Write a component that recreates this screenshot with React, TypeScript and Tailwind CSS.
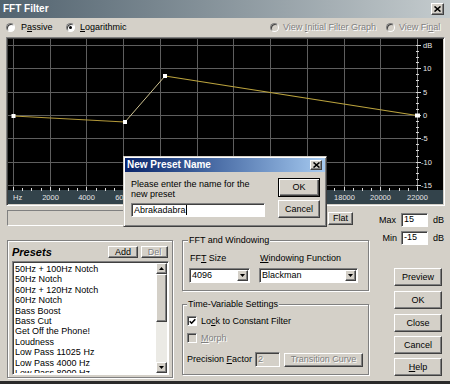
import React from "react";

const raised =
  "border border-t-white border-l-white border-r-[#404040] border-b-[#404040] shadow-[inset_-1px_-1px_0_#808080]";
const sunken =
  "border border-t-[#808080] border-l-[#808080] border-r-white border-b-white shadow-[inset_1px_1px_0_#404040]";
const etched = "border border-[#808080] shadow-[1px_1px_0_#ffffff,inset_1px_1px_0_#ffffff]";
const disabledText = "text-[#808080] [text-shadow:1px_1px_0_#ffffff]";

function U({ children }: { children: React.ReactNode }) {
  return <span className="underline underline-offset-[1px]">{children}</span>;
}

function Btn({
  children,
  className = "",
  disabled = false,
}: {
  children: React.ReactNode;
  className?: string;
  disabled?: boolean;
}) {
  return (
    <div
      className={`flex items-center justify-center bg-[#d4d0c8] leading-none ${raised} ${
        disabled ? disabledText : "text-black"
      } ${className}`}
    >
      {children}
    </div>
  );
}

function XGlyph() {
  return (
    <svg width="7" height="6" viewBox="0 0 7 6">
      <path d="M0.5 0.5L6.5 5.5M6.5 0.5L0.5 5.5" stroke="#000" strokeWidth="1.6" />
    </svg>
  );
}

function DownArrow() {
  return (
    <svg width="5" height="3" viewBox="0 0 5 3">
      <path d="M0 0H5L2.5 3Z" fill="#000" />
    </svg>
  );
}

function UpArrow() {
  return (
    <svg width="5" height="3" viewBox="0 0 5 3">
      <path d="M0 3H5L2.5 0Z" fill="#000" />
    </svg>
  );
}

function Radio({ checked = false, disabled = false }: { checked?: boolean; disabled?: boolean }) {
  return (
    <span
      className={`relative inline-block shrink-0 w-[9px] h-[9px] rounded-full border border-t-[#808080] border-l-[#808080] border-b-white border-r-white shadow-[inset_1px_1px_0_#404040] ${
        disabled ? "bg-[#d4d0c8]" : "bg-white"
      }`}
    >
      {checked && <span className="absolute left-[2px] top-[2px] w-[3px] h-[3px] rounded-full bg-black" />}
    </span>
  );
}

function Check({ checked = false, disabled = false }: { checked?: boolean; disabled?: boolean }) {
  return (
    <span
      className={`inline-flex shrink-0 items-center justify-center w-[10px] h-[10px] ${sunken} ${
        disabled ? "bg-[#d4d0c8]" : "bg-white"
      }`}
    >
      {checked && (
        <svg width="7" height="7" viewBox="0 0 7 7">
          <path d="M0.7 3.2L2.6 5.2L6.3 1.2" stroke="#000" strokeWidth="1.6" fill="none" />
        </svg>
      )}
    </span>
  );
}

function Select({ value, className = "" }: { value: string; className?: string }) {
  return (
    <div className={`flex items-center bg-white h-[15px] pl-[2px] pr-px ${sunken} ${className}`}>
      <span className="flex-1 leading-none">{value}</span>
      <div className={`w-[11px] h-[11px] flex items-center justify-center bg-[#d4d0c8] ${raised}`}>
        <DownArrow />
      </div>
    </div>
  );
}

function Graph() {
  const step = 36.73;
  const xs = Array.from({ length: 12 }, (_, k) => Math.round(5 + step * k) + 0.5);
  const ys = [6, 29.33, 52.67, 76, 99.33, 122.67, 146].map((y) => Math.round(y) + 0.5);
  const dbs = ["dB", "10", "5", "0", "-5", "-10", "-15"];
  const minorX = Array.from({ length: 45 }, (_, i) => Math.round(5 + (i * step) / 4) + 0.5);
  const minorY = Array.from({ length: 25 }, (_, i) => Math.round(6 + (i * 23.333) / 4) + 0.5);
  const p = [
    [5.5, 77],
    [117, 83],
    [157, 37],
    [409, 76.5],
  ];
  return (
    <svg width="435" height="165" viewBox="0 0 435 165" className="block">
      <rect width="435" height="165" fill="#000" />
      <rect y="151" width="435" height="14" fill="#33434b" />
      {xs.map((x) => (
        <line key={"v" + x} x1={x} x2={x} y1="0" y2="151" stroke="#5e5e5e" strokeWidth="1" />
      ))}
      {ys.map((y) => (
        <line key={"h" + y} x1="0" x2="410" y1={y} y2={y} stroke="#5e5e5e" strokeWidth="1" />
      ))}
      <line x1="409.5" x2="409.5" y1="0" y2="151" stroke="#8a8a8a" strokeWidth="1" />
      {minorX.map((x, i) => (
        <line
          key={"mx" + i}
          x1={x}
          x2={x}
          y1={i % 4 === 0 ? 148 : 149}
          y2="152"
          stroke="#d8d8d8"
          strokeWidth="1"
        />
      ))}
      {minorY.map((y, i) => (
        <line
          key={"my" + i}
          x1="408"
          x2={i % 4 === 0 ? 413 : 411}
          y1={y}
          y2={y}
          stroke="#d8d8d8"
          strokeWidth="1"
        />
      ))}
      {ys.map((y, i) => (
        <text
          key={"t" + i}
          x={dbs[i].startsWith("-") ? 413 : 415}
          y={y + 2.8}
          fontSize="7.5"
          fill="#e4e4e4"
          fontFamily="'Liberation Sans', Arial, sans-serif"
        >
          {dbs[i]}
        </text>
      ))}
      <text x="5" y="161" fontSize="7.5" fill="#e4e4e4" fontFamily="'Liberation Sans', Arial, sans-serif">
        Hz
      </text>
      {xs.slice(1).map((x, i) => (
        <text
          key={"l" + i}
          x={x}
          y="161"
          fontSize="7.5"
          textAnchor="middle"
          fill="#e4e4e4"
          fontFamily="'Liberation Sans', Arial, sans-serif"
        >
          {(i + 1) * 2000}
        </text>
      ))}
      <line x1={p[0][0]} y1={p[0][1]} x2={p[1][0]} y2={p[1][1]} stroke="#b49a3a" strokeWidth="1.2" />
      <line x1={p[1][0]} y1={p[1][1]} x2={p[2][0]} y2={p[2][1]} stroke="#cfc392" strokeWidth="1" />
      <line x1={p[2][0]} y1={p[2][1]} x2={p[3][0]} y2={p[3][1]} stroke="#bca43e" strokeWidth="1.2" />
      {p.map(([x, y], i) => (
        <rect key={"p" + i} x={x - 2} y={y - 2} width={i === 3 ? 5 : 4} height="4" fill="#ffffff" />
      ))}
    </svg>
  );
}

const presets = [
  "50Hz + 100Hz Notch",
  "50Hz Notch",
  "60Hz + 120Hz Notch",
  "60Hz Notch",
  "Bass Boost",
  "Bass Cut",
  "Get Off the Phone!",
  "Loudness",
  "Low Pass 11025 Hz",
  "Low Pass 4000 Hz",
  "Low Pass 8000 Hz",
];

export default function App() {
  return (
    <div className="relative w-[450px] h-[384px] overflow-hidden bg-[#d4d0c8] text-black text-[9px] font-['Liberation_Sans',Arial,sans-serif] border-b-[3px] border-b-[#2a2a2a] flex flex-col">
      {/* Title bar */}
      <div className="h-[18px] shrink-0 flex items-center bg-linear-to-r from-[#52636f] to-[#c5ccce] pl-[3px] pr-[6px]">
        <span className="text-white font-bold text-[10px] leading-none">FFT Filter</span>
        <div className={`ml-auto w-[13px] h-[12px] flex items-center justify-center bg-[#d4d0c8] ${raised}`}>
          <XGlyph />
        </div>
      </div>

      {/* Radio row */}
      <div className="h-[19px] shrink-0 flex items-center pl-[6px]">
        <div className="w-[60px] flex items-center gap-[6px]">
          <Radio />
          <span className="leading-none">
            P<U>a</U>ssive
          </span>
        </div>
        <div className="w-[204px] flex items-center gap-[5px]">
          <Radio checked />
          <span className="leading-none">
            <U>L</U>ogarithmic
          </span>
        </div>
        <div className="w-[116px] flex items-center gap-[4px]">
          <Radio disabled />
          <span className={`leading-none ${disabledText}`}>
            View <U>I</U>nitial Filter Graph
          </span>
        </div>
        <div className="flex items-center gap-[4px]">
          <Radio disabled />
          <span className={`leading-none ${disabledText}`}>
            View Fi<U>n</U>al
          </span>
        </div>
      </div>

      {/* Graph */}
      <div className="ml-[6px] w-[439px] h-[169px] shrink-0 p-px border border-t-[#808080] border-l-[#808080] border-r-white border-b-white shadow-[inset_1px_1px_0_#404040]">
        <Graph />
      </div>

      {/* Lower section */}
      <div className="flex flex-1">
        <div className="ml-[7px] w-[363px] flex flex-col">
          <div className="mt-[4px] h-[16px] flex items-start">
            <div className="w-[316px] h-[16px] border border-t-[#808080] border-l-[#808080] border-r-white border-b-white" />
            <Btn className="ml-[5px] mt-[2px] w-[25px] h-[13px]">Flat</Btn>
          </div>

          <div className="mt-[14px] flex">
            {/* Presets */}
            <div className={`w-[166px] h-[138px] flex flex-col ${etched}`}>
              <div className="mt-[5px] h-[12px] flex items-center pl-[4px] pr-[4px]">
                <span className="font-bold italic text-[11px] leading-none">Presets</span>
                <Btn className="ml-auto w-[30px] h-[12px]">Add</Btn>
                <Btn className="ml-[3px] w-[27px] h-[12px]" disabled>
                  Del
                </Btn>
              </div>
              <div className={`mt-[3px] ml-[4px] w-[157px] h-[114px] bg-white flex p-px ${sunken}`}>
                <div className="flex-1 flex flex-col pl-[1px] pt-px overflow-hidden">
                  {presets.map((t) => (
                    <div key={t} className="h-[10.4px] shrink-0 leading-[10.4px] whitespace-nowrap">
                      {t}
                    </div>
                  ))}
                </div>
                <div className="w-[11px] flex flex-col bg-[#ebeae5]">
                  <div className={`h-[11px] shrink-0 flex items-center justify-center bg-[#d4d0c8] ${raised}`}>
                    <UpArrow />
                  </div>
                  <div className={`h-[48px] shrink-0 bg-[#d4d0c8] ${raised}`} />
                  <div className="flex-1" />
                  <div className={`h-[11px] shrink-0 flex items-center justify-center bg-[#d4d0c8] ${raised}`}>
                    <DownArrow />
                  </div>
                </div>
              </div>
            </div>

            {/* Right groups */}
            <div className="ml-[9px] w-[187px] flex flex-col">
              <div className={`relative h-[51px] ${etched} pl-[6px]`}>
                <span className="absolute left-[5px] -top-[6px] px-px bg-[#d4d0c8] leading-[10px]">
                  FFT and Windowing
                </span>
                <div className="flex gap-[9px] pt-[12px]">
                  <div className="w-[61px] flex flex-col">
                    <span className="pl-px leading-[10px]">
                      FF<U>T</U> Size
                    </span>
                    <Select value="4096" className="mt-[5px] w-[61px]" />
                  </div>
                  <div className="w-[99px] flex flex-col">
                    <span className="pl-px leading-[10px]">
                      <U>W</U>indowing Function
                    </span>
                    <Select value="Blackman" className="mt-[5px] w-[99px]" />
                  </div>
                </div>
              </div>

              <div className={`relative mt-[13px] h-[71px] ${etched} pl-[4px]`}>
                <span className="absolute left-[4px] -top-[6px] px-px bg-[#d4d0c8] leading-[10px]">
                  Time-Variable Settings
                </span>
                <div className="mt-[11px] h-[10px] flex items-center gap-[4px]">
                  <Check checked />
                  <span className="leading-none">
                    Lo<U>c</U>k to Constant Filter
                  </span>
                </div>
                <div className="mt-[7px] h-[10px] flex items-center gap-[4px]">
                  <Check disabled />
                  <span className={`leading-none ${disabledText}`}>
                    <U>M</U>orph
                  </span>
                </div>
                <div className="mt-[9px] h-[15px] flex items-center">
                  <span className="w-[68px] leading-none">
                    Precision <U>F</U>actor
                  </span>
                  <div className={`w-[25px] h-[15px] flex items-center pl-[2px] bg-[#d4d0c8] ${sunken} ${disabledText}`}>
                    2
                  </div>
                  <Btn className="ml-[4px] w-[79px] h-[14px]" disabled>
                    Transition Curve
                  </Btn>
                </div>
              </div>
            </div>
          </div>
        </div>

        {/* Right column */}
        <div className="ml-[5px] flex flex-col">
          <div className="mt-[7px] h-[14px] flex items-center">
            <span className="w-[21px] text-right leading-none">Max</span>
            <div className={`ml-[5px] w-[27px] h-[14px] flex items-center pl-[2px] bg-white ${sunken}`}>15</div>
            <span className="ml-[5px] leading-none">dB</span>
          </div>
          <div className="mt-[4px] h-[14px] flex items-center">
            <span className="w-[22px] text-right leading-none">Min</span>
            <div className={`ml-[4px] w-[27px] h-[14px] flex items-center pl-[2px] bg-white ${sunken}`}>-15</div>
            <span className="ml-[5px] leading-none">dB</span>
          </div>
          <Btn className="mt-[23px] ml-[19px] w-[48px] h-[18px]">Preview</Btn>
          <Btn className="mt-[5px] ml-[19px] w-[48px] h-[18px]">OK</Btn>
          <Btn className="mt-[5px] ml-[19px] w-[48px] h-[18px]">Close</Btn>
          <Btn className="mt-[4px] ml-[19px] w-[48px] h-[18px]">Cancel</Btn>
          <Btn className="mt-[4px] ml-[19px] w-[48px] h-[18px]">
            <U>H</U>elp
          </Btn>
        </div>
      </div>

      {/* Dialog */}
      <div className="absolute left-[123px] top-[156px] w-[204px] h-[71px] bg-[#d4d0c8] p-px flex flex-col border border-t-[#d4d0c8] border-l-[#d4d0c8] border-r-[#404040] border-b-[#404040] shadow-[inset_1px_1px_0_#ffffff,inset_-1px_-1px_0_#808080]">
        <div className="h-[14px] shrink-0 flex items-center bg-linear-to-r from-[#0a246a] to-[#a6caf0] pl-[2px] pr-[3px]">
          <span className="text-white font-bold text-[10px] leading-none">New Preset Name</span>
          <div className={`ml-auto w-[12px] h-[10px] flex items-center justify-center bg-[#d4d0c8] ${raised}`}>
            <XGlyph />
          </div>
        </div>
        <div className="flex">
          <div className="pl-[6px] w-[140px] flex flex-col">
            <div className="pt-[7px] leading-[10px]">
              Please enter the name for the
              <br />
              new preset
            </div>
            <div className={`mt-[4px] w-[134px] h-[14px] flex items-center pl-[2px] bg-white ${sunken}`}>
              <span className="leading-none">Abrakadabra</span>
              <span className="w-px h-[10px] bg-black" />
            </div>
          </div>
          <div className="ml-[13px] flex flex-col pt-[6px]">
            <div className="w-[42px] h-[19px] flex items-center justify-center bg-[#d4d0c8] border border-black shadow-[inset_1px_1px_0_#ffffff,inset_-1px_-1px_0_#404040,inset_-2px_-2px_0_#808080] leading-none">
              OK
            </div>
            <Btn className="mt-[3px] w-[42px] h-[18px]">Cancel</Btn>
          </div>
        </div>
      </div>
    </div>
  );
}
